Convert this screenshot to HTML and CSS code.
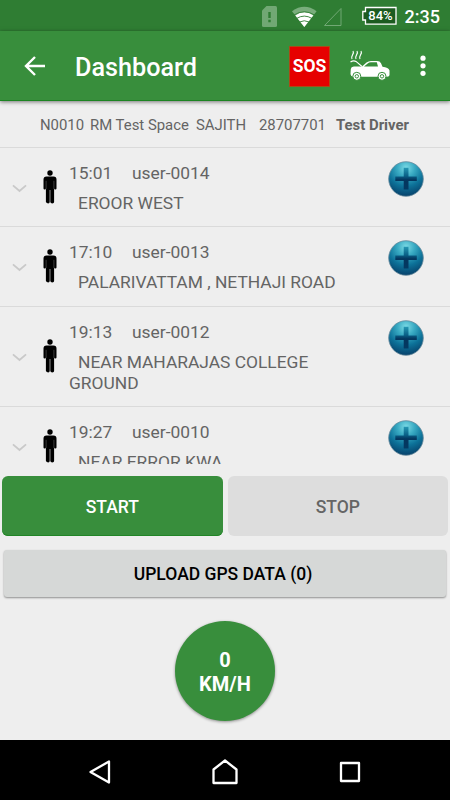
FILE: index.html
```html
<!DOCTYPE html>
<html lang="en">
<head>
<meta charset="utf-8">
<title>Dashboard</title>
<link rel="stylesheet" href="styles.css">
</head>
<body>
<svg class="defs" width="0" height="0" aria-hidden="true">
  <defs>
    <radialGradient id="ball" cx=".5" cy=".18" r=".85">
      <stop offset="0" stop-color="#7ddbe6"/><stop offset=".3" stop-color="#38a9c2"/><stop offset=".62" stop-color="#0d7299"/><stop offset="1" stop-color="#063c66"/>
    </radialGradient>
    <linearGradient id="cross" x1="0" y1="0" x2="0" y2="1">
      <stop offset="0" stop-color="#2597b3"/><stop offset=".38" stop-color="#0a5f86"/><stop offset=".55" stop-color="#04365e"/><stop offset="1" stop-color="#043962"/>
    </linearGradient>
    <symbol id="man" viewBox="0 0 14 34">
      <circle cx="7" cy="3" r="2.700"/>
      <path d="M3.500 6.400h7q3 0 3 3v9q0 1-1.200 1t-1.200-1V32q0 1.400-1.800 1.400T7.300 32V20h-.6v12q0 1.400-1.500 1.400T2.900 32V18.400q0 1-1.200 1t-1.200-1v-9q0-3 3-3z"/>
      <path d="M3.100 10.800v8.200M10.900 10.800v8.200" stroke="#777" stroke-width=".5"/>
    </symbol>
    <symbol id="chev" viewBox="0 0 16 9"><path d="M1 1.200l7 6 7-6" fill="none" stroke="#c9c9c9" stroke-width="1.900"/></symbol>
    <symbol id="plus" viewBox="0 0 36 36">
      <circle cx="18" cy="18" r="17.300" fill="url(#ball)" stroke="#66899a" stroke-width=".8"/>
      <path d="M15.700 6.800h4.800v8.800H28.800v4.400h-8.300v8.600h-4.800V20H7.300v-4.400h8.400z" fill="url(#cross)"/>
    </symbol>
  </defs>
</svg>
<div class="status">
  <svg width="180" height="31" viewBox="255 0 180 31">
    <path d="M266.500 6h9q1.500 0 1.500 1.500v18q0 1.500-1.500 1.500h-12q-1.500 0-1.500-1.500v-15z" fill="#71a874"/>
    <path d="M268.300 12h2.400v6h-2.400zM268.300 19.700h2.400v2.500h-2.400z" fill="#2f7d33"/>
    <path d="M304.300 27L292 11.200q12.300-8.800 24.600 0z" fill="#79ad7c"/>
    <path d="M304.300 27l-9-11.600q9-6.400 18 0z" fill="#fff"/>
    <path d="M294 15q10.300-6.500 20.600 0M296.500 18.500q7.800-4.800 15.600 0M299.500 22q4.800-2.500 9.600 0" fill="none" stroke="#2f7d33" stroke-width=".9"/>
    <path d="M324.500 25.500L341 8.500v17z" fill="none" stroke="#71a874"/>
    <path d="M365.500 7.500H396v16.700h-30.500v-4.200h-2.700v-8.500h2.700z" fill="#1c5b20" stroke="#fff" stroke-width="1.300"/>
    <text x="380.500" y="20.300" class="battery">84%</text>
  </svg>
  <span class="clock">2:35</span>
</div>
<header class="appbar">
  <svg class="back" width="22" height="22" viewBox="0 0 22 22"><path d="M21 11H2.500M11 2L2 11l9 9" fill="none" stroke="#fff" stroke-width="2.400"/></svg>
  <h1>Dashboard</h1>
  <span class="sos">SOS</span>
  <svg class="car" width="42" height="34" viewBox="0 0 42 34">
    <g fill="none" stroke="#fff" stroke-width="1.200"><path d="M2 10q-1-1.500 .5-4t.5-4M6 10q-1-1.500 .5-4t.5-4M10 10q-1-1.500 .5-4t.5-4"/><path d="M.5 13q3-2 5.500-.6L12 17.500"/></g>
    <path d="M.8 20q.2-2.300 3-2.500h8.200l4.500-4q2-1.600 4.500-1.600h6q3 0 4 2.300l1.500 3.600q6 .5 7 3.600V26q0 1.800-2.500 1.800H3q-2.500-.8-2.500-2.800z" fill="#fff"/>
    <path d="M14 17.500l3.700-3.100q1.300-1.100 3.300-1.100h5.800l1.200 4.200z" fill="#388e3c"/>
    <g fill="#fff" stroke="#388e3c"><circle cx="6.800" cy="27.300" r="4"/><circle cx="32" cy="27.300" r="4"/></g>
    <g fill="none" stroke="#388e3c" stroke-width="1"><circle cx="6.800" cy="27.300" r="1.700"/><circle cx="32" cy="27.300" r="1.700"/></g>
  </svg>
  <svg class="more" width="6" height="22" viewBox="0 0 6 22" fill="#fff"><circle cx="3" cy="3.200" r="2.600"/><circle cx="3" cy="10.800" r="2.600"/><circle cx="3" cy="18.300" r="2.600"/></svg>
</header>
<div class="driver"><span class="id">N0010</span><span class="space">RM Test Space</span><span class="name">SAJITH</span><span class="phone">28707701</span><b>Test Driver</b></div>
<main class="list">
  <div class="row"><svg class="chev"><use href="#chev"/></svg><svg class="man"><use href="#man"/></svg>
    <div class="info"><div class="who"><span>15:01</span><span>user-0014</span></div><div class="place">EROOR WEST</div></div><svg class="plus"><use href="#plus"/></svg></div>
  <div class="row"><svg class="chev"><use href="#chev"/></svg><svg class="man"><use href="#man"/></svg>
    <div class="info"><div class="who"><span>17:10</span><span>user-0013</span></div><div class="place">PALARIVATTAM , NETHAJI ROAD</div></div><svg class="plus"><use href="#plus"/></svg></div>
  <div class="row"><svg class="chev"><use href="#chev"/></svg><svg class="man"><use href="#man"/></svg>
    <div class="info"><div class="who"><span>19:13</span><span>user-0012</span></div><div class="place">NEAR MAHARAJAS COLLEGE<br>GROUND</div></div><svg class="plus"><use href="#plus"/></svg></div>
  <div class="row"><svg class="chev"><use href="#chev"/></svg><svg class="man"><use href="#man"/></svg>
    <div class="info"><div class="who"><span>19:27</span><span>user-0010</span></div><div class="place">NEAR ERROR KWA</div></div><svg class="plus"><use href="#plus"/></svg></div>
</main>
<div class="actions"><button class="start">START</button><button class="stop">STOP</button></div>
<button class="upload">UPLOAD GPS DATA (0)</button>
<div class="speed"><span>0</span><span>KM/H</span></div>
<nav class="nav">
  <svg width="22" height="24" viewBox="0 0 22 24"><path d="M20 1.500v21L1.500 12z"/></svg>
  <svg width="26" height="26" viewBox="0 0 26 26"><path d="M1.500 10.500L13 1.500l11.500 9V24h-23z"/></svg>
  <svg width="22" height="22" viewBox="0 0 22 22"><path d="M2 2h18v18H2z"/></svg>
</nav>
</body>
</html>
```

FILE: styles.css
```css
* { box-sizing: border-box; }
body {
  margin: 0;
  width: 450px;
  height: 800px;
  overflow: hidden;
  display: flex;
  flex-direction: column;
  background: #eee;
  font-family: Roboto, "Liberation Sans", sans-serif;
  color: #646464;
}
svg { display: block; flex: none; }
.defs { position: absolute; }
button { border: 0; padding: 0; font: 500 17.500px Roboto, sans-serif; }

.status { flex: none; height: 31px; background: #2f7d33; display: flex; justify-content: flex-end; position: relative; }
.status svg { position: absolute; left: 255px; top: 0; }
.battery { font: 500 13px Roboto, sans-serif; fill: #fff; text-anchor: middle; }
.clock { color: #fff; font-size: 18px; font-weight: 500; line-height: 33px; margin-right: 10px; }

.appbar {
  flex: none;
  height: 70px;
  display: flex;
  align-items: center;
  padding: 1px 0 0 24px;
  background: #388e3c;
  border-bottom: 1px solid #1c8422;
  box-shadow: 0 1px 4px rgba(0, 0, 0, .5);
  z-index: 1;
}
h1 { margin: 4px 0 0 29px; width: 214px; color: #fff; font-size: 25.200px; font-weight: 500; line-height: 30px; }
.sos { width: 41px; height: 41px; background: #e60000; border: 1px solid #a94b16; color: #fff; font-size: 17.500px; font-weight: 700; line-height: 39px; text-align: center; }
.car { margin-left: 20px; }
.more { margin-left: 27.500px; }

.driver { flex: none; height: 47px; display: flex; align-items: center; padding: 1px 0 0 40px; font-size: 14.900px; border-bottom: 1px solid #dadada; white-space: nowrap; }
.driver > * { flex: none; }
.id { width: 50px; }
.space { width: 106px; }
.name { width: 63px; }
.phone { width: 77px; }

.list { flex: none; height: 316px; overflow: hidden; }
.row { display: flex; align-items: center; border-bottom: 1px solid #dadada; padding-left: 12px; }
.chev { width: 15px; height: 9px; margin-top: 2px; }
.man { width: 14px; height: 34px; margin-left: 16px; }
.info { width: 319px; margin-left: 12px; padding: 15px 0 12.300px; font-size: 17.400px; line-height: 21px; }
.who { display: flex; }
.who span:first-child { width: 63px; }
.place { margin-top: 9px; text-indent: 9px; }
.plus { width: 36px; height: 36px; align-self: flex-start; margin-top: 13px; }

.actions { flex: none; display: flex; gap: 5px; margin: 12px 2px 0; }
.actions button { flex: 1; height: 60px; border-radius: 6px; padding-top: 1px; }
.start { background: #388e3c; color: #fff; box-shadow: inset 0 -1px 0 #218526; }
.stop { background: #ddd; color: #656565; }
.upload { flex: none; height: 47px; margin: 14px 4px 0; padding-right: 4px; border-radius: 3px; background: #d6d8d7; color: #000; box-shadow: 0 1px 2px rgba(0, 0, 0, .4); }
.speed {
  flex: none;
  width: 100px;
  height: 100px;
  margin: 24px auto 0;
  border-radius: 50%;
  display: flex;
  flex-direction: column;
  align-items: center;
  justify-content: center;
  background: #388e3c;
  color: #fff;
  font-size: 20px;
  font-weight: 700;
  line-height: 24px;
  padding-top: 2px;
  box-shadow: 0 1px 3px rgba(0, 0, 0, .4);
}
.nav { height: 60px; margin-top: auto; display: flex; justify-content: space-between; align-items: center; padding: 3px 89px 0; background: #000; }
.nav svg { fill: none; stroke: #fff; stroke-width: 2.300; stroke-linejoin: round; }
```
